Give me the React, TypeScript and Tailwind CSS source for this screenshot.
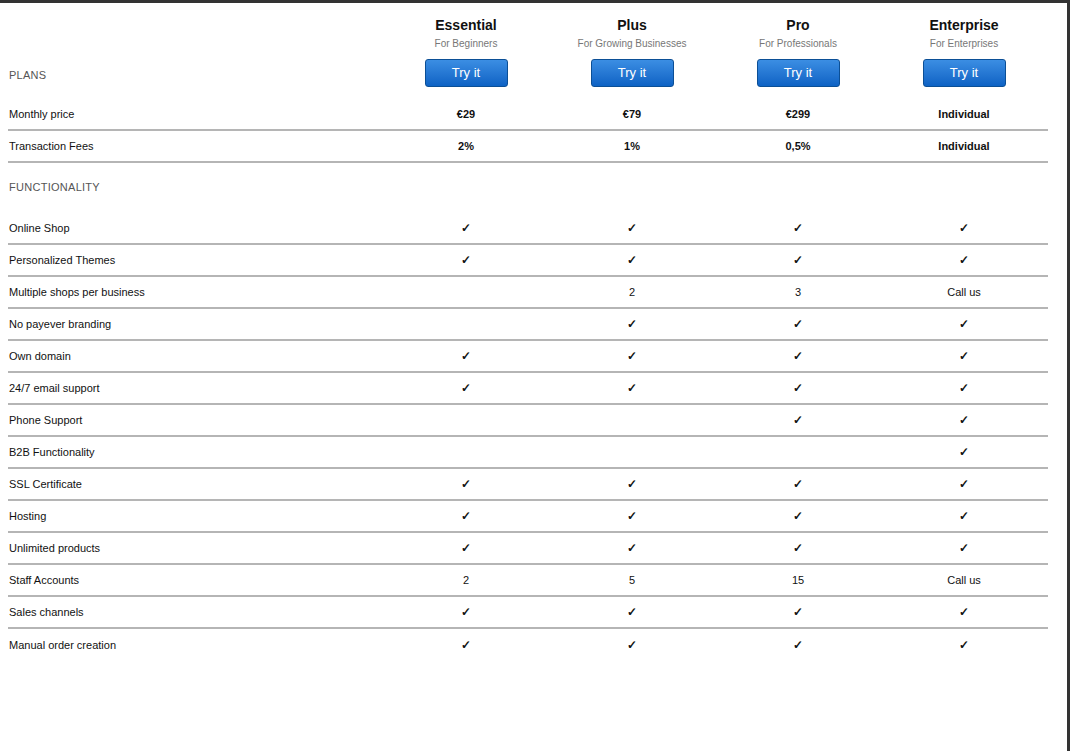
import React from "react";

const C = "✓";
const rows: [string, string[]][] = [
  ["Online Shop", [C, C, C, C]],
  ["Personalized Themes", [C, C, C, C]],
  ["Multiple shops per business", ["", "2", "3", "Call us"]],
  ["No payever branding", ["", C, C, C]],
  ["Own domain", [C, C, C, C]],
  ["24/7 email support", [C, C, C, C]],
  ["Phone Support", ["", "", C, C]],
  ["B2B Functionality", ["", "", "", C]],
  ["SSL Certificate", [C, C, C, C]],
  ["Hosting", [C, C, C, C]],
  ["Unlimited products", [C, C, C, C]],
  ["Staff Accounts", ["2", "5", "15", "Call us"]],
  ["Sales channels", [C, C, C, C]],
  ["Manual order creation", [C, C, C, C]],
];
const plans = [
  ["Essential", "For Beginners"],
  ["Plus", "For Growing Businesses"],
  ["Pro", "For Professionals"],
  ["Enterprise", "For Enterprises"],
];

function Row({ label, vals, bold, last }: { label: string; vals: string[]; bold?: boolean; last?: boolean }) {
  return (
    <div className={`flex h-[32px] items-center ${last ? "" : "border-b-2 border-[#b5b5b5]"}`}>
      <div className="w-[375px] pl-[1px] text-[11px] text-[#111]">{label}</div>
      {vals.map((v, i) => (
        <div key={i} className={`w-[166px] text-center text-[#111] ${v === C ? "text-[12px] font-bold" : "text-[11px]"} ${bold ? "font-bold" : ""}`}>{v}</div>
      ))}
    </div>
  );
}

export default function App() {
  return (
    <div className="w-[1070px] h-[751px] bg-white border-t-[3px] border-t-[#333] border-r-[3px] border-r-[#333] overflow-hidden" style={{ fontFamily: '"Liberation Sans", Arial, sans-serif' }}>
      <div className="pl-[8px] w-[1048px]">
        <div className="flex h-[96px]">
          <div className="w-[375px] flex items-end pb-[16px] pl-[1px] text-[11px] text-[#555] tracking-wide">PLANS</div>
          {plans.map(([n, s]) => (
            <div key={n} className="w-[166px] flex flex-col items-center pt-[14px]">
              <div className="text-[14px] font-bold text-[#111] leading-[17px]">{n}</div>
              <div className="text-[10px] text-[#777] leading-[12px] mt-[4px]">{s}</div>
              <button className="mt-[9px] w-[83px] h-[28px] rounded-[3px] border border-[#0b4f96] text-white text-[13px] bg-gradient-to-b from-[#3b8ee3] to-[#0d62c4]">Try it</button>
            </div>
          ))}
        </div>
        <Row label="Monthly price" vals={["€29", "€79", "€299", "Individual"]} bold />
        <Row label="Transaction Fees" vals={["2%", "1%", "0,5%", "Individual"]} bold />
        <div className="h-[50px] flex items-center pb-[1px] pl-[1px] text-[11px] text-[#555] tracking-wide">FUNCTIONALITY</div>
        {rows.map(([l, v], i) => (
          <Row key={l} label={l} vals={v} last={i === rows.length - 1} />
        ))}
      </div>
    </div>
  );
}
